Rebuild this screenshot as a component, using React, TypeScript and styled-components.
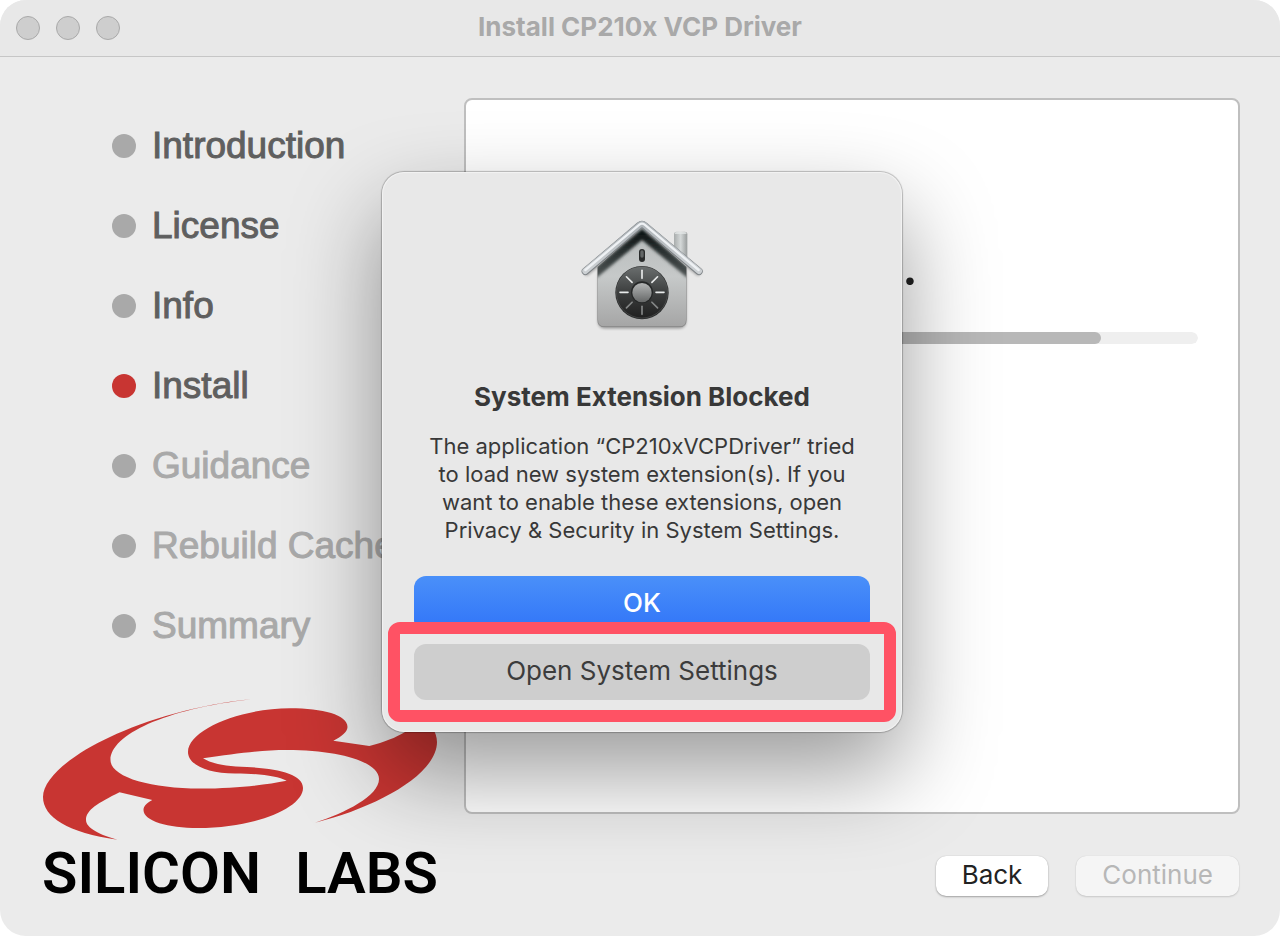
import React from "react";
import styled, { createGlobalStyle } from "styled-components";

const GlobalStyle = createGlobalStyle`
  *, *::before, *::after { box-sizing: border-box; }
  body { margin: 0; background: #fff; font-family: Inter, "Liberation Sans", sans-serif; }
  button { font: inherit; border: 0; padding: 0; }
  h1, h2, p, ol { margin: 0; padding: 0; }
`;

const Window = styled.div`
  position: relative;
  display: flex;
  flex-direction: column;
  min-height: 100vh;
  overflow: hidden;
  border-radius: 26px;
  background: #ebebeb;
`;

const TitleBar = styled.header`
  display: grid;
  grid-template-columns: 1fr auto 1fr;
  align-items: center;
  height: 57px;
  padding: 0 16px;
  background: #e8e8e8;
  border-bottom: 1px solid #c6c6c6;
`;

const Lights = styled.div`
  display: flex;
  gap: 16px;
`;

const Light = styled.button`
  width: 24px;
  height: 24px;
  border-radius: 50%;
  border: 1px solid #a9a9a9;
  background: #cecece;
`;

const Title = styled.h1`
  padding-bottom: 2px;
  font-size: 26px;
  line-height: 32px;
  font-weight: 700;
  color: #a9a9a9;
`;

const Content = styled.div`
  flex: 1;
  display: grid;
  grid-template-columns: 422px 1fr;
  padding: 41px 40px 40px 42px;
`;

const Sidebar = styled.div`
  display: flex;
  flex-direction: column;
  justify-content: space-between;
`;

const Steps = styled.ol`
  list-style: none;
  padding: 8px 0 0 70px;
`;

const Step = styled.li<{ $state: "done" | "current" | "pending" }>`
  display: flex;
  align-items: center;
  gap: 16px;
  height: 80px;
  white-space: nowrap;
  font-family: "Liberation Sans", Arial, sans-serif;
  font-size: 37px;
  line-height: 40px;
  color: ${(p) => (p.$state === "pending" ? "#a9a9a9" : "#5f5f5f")};
  -webkit-text-stroke: 1px currentColor;

  &::before {
    content: "";
    width: 24px;
    height: 24px;
    border-radius: 50%;
    background: ${(p) => (p.$state === "current" ? "#c83532" : "#a9a9a9")};
  }
`;

const Brand = styled.div`
  width: 396px;
  margin-bottom: -10px;
`;

const Swoosh = styled.svg`
  display: block;
  width: 100%;
`;

const Wordmark = styled.div`
  display: flex;
  justify-content: space-between;
  font-family: Roboto, "Liberation Sans", sans-serif;
  font-weight: 600;
  font-size: 58px;
  line-height: 66px;
  color: #000;
`;

const Main = styled.main`
  display: flex;
  flex-direction: column;
  gap: 42px;
`;

const Panel = styled.section`
  flex: 1;
  padding: 140px 40px 0;
  border: 2px solid #bfbfbf;
  border-radius: 8px;
  background: #fff;
`;

const Status = styled.p`
  padding-left: 366px;
  font-family: Lato, sans-serif;
  font-size: 60px;
  line-height: 44px;
  height: 92px;
  color: #222;
`;

const Progress = styled.progress`
  display: block;
  appearance: none;
  width: 100%;
  height: 12px;
  border: 0;
  border-radius: 6px;
  overflow: hidden;

  &::-webkit-progress-bar {
    background: #efefef;
    border-radius: 6px;
  }
  &::-webkit-progress-value {
    background: #b8b8b8;
    border-radius: 6px;
  }
`;

const Actions = styled.footer`
  display: flex;
  justify-content: flex-end;
  gap: 28px;
  padding-right: 1px;
`;

const PushButton = styled.button`
  height: 40px;
  padding: 0 26px 2px;
  border-radius: 10px;
  background: #fff;
  color: #222;
  font-size: 26px;
  line-height: 38px;
  box-shadow: 0 1px 2px rgba(0, 0, 0, 0.3), 0 0 1px rgba(0, 0, 0, 0.2);

  &:disabled {
    background: #f5f5f5;
    color: #b7b7b7;
    box-shadow: 0 1px 2px rgba(0, 0, 0, 0.14), 0 0 1px rgba(0, 0, 0, 0.14);
  }
`;

const Overlay = styled.div`
  position: absolute;
  inset: 0;
  display: flex;
  justify-content: center;
  align-items: flex-start;
  padding: 172px 0 0 4px;
`;

const Dialog = styled.div`
  display: flex;
  flex-direction: column;
  align-items: center;
  width: 520px;
  padding: 40px 32px 32px;
  border-radius: 22px;
  background: #e8e8e8;
  color: #383838;
  text-align: center;
  box-shadow: inset 0 0 1px 1px rgba(255, 255, 255, 0.5),
    0 0 1px 1px rgba(0, 0, 0, 0.24), 0 40px 92px rgba(0, 0, 0, 0.4);
`;

const DialogTitle = styled.h2`
  margin-top: 41px;
  font-size: 26px;
  line-height: 32px;
  font-weight: 700;
`;

const DialogText = styled.p`
  margin: 19px 0 32px;
  padding: 0 8px;
  font-size: 22px;
  line-height: 28px;
`;

const DialogButton = styled.button<{ $primary?: boolean }>`
  display: block;
  width: 100%;
  height: 56px;
  padding-bottom: 2px;
  border-radius: 12px;
  font-size: 26px;
  line-height: 54px;
  font-weight: ${(p) => (p.$primary ? 500 : 400)};
  color: ${(p) => (p.$primary ? "#fff" : "#3c3c3c")};
  background: ${(p) => (p.$primary ? "linear-gradient(#4a90f9, #3074f8)" : "#cecece")};
`;

const Highlight = styled.div`
  position: relative;
  width: 100%;
  margin-top: 12px;

  &::after {
    content: "";
    position: absolute;
    inset: -22px -26px;
    border: 12px solid #ff5264;
    border-radius: 12px;
    pointer-events: none;
  }
`;

const steps: { label: string; state: "done" | "current" | "pending" }[] = [
  { label: "Introduction", state: "done" },
  { label: "License", state: "done" },
  { label: "Info", state: "done" },
  { label: "Install", state: "current" },
  { label: "Guidance", state: "pending" },
  { label: "Rebuild Cache", state: "pending" },
  { label: "Summary", state: "pending" },
];

const ticks = [0, 45, 90, 135, 180, 225, 270, 315];

function SecurityIcon() {
  return (
    <svg width="128" height="128" viewBox="24 21 384 384" aria-hidden="true">
      <defs>
        <linearGradient id="wall" x1="0" y1="0" x2="0" y2="1">
          <stop offset="0" stopColor="#b4b8b8" />
          <stop offset="0.5" stopColor="#c6c9c9" />
          <stop offset="1" stopColor="#a4a4a4" />
        </linearGradient>
        <linearGradient id="chimney" x1="0" y1="0" x2="1" y2="0">
          <stop offset="0" stopColor="#a8acac" />
          <stop offset="0.5" stopColor="#d4d8d8" />
          <stop offset="1" stopColor="#989c9c" />
        </linearGradient>
        <linearGradient id="roof" x1="0" y1="0" x2="0" y2="1">
          <stop offset="0" stopColor="#aeb4b8" />
          <stop offset="1" stopColor="#ccd0d3" />
        </linearGradient>
        <linearGradient id="dial" x1="0" y1="0" x2="0" y2="1">
          <stop offset="0" stopColor="#6a6e6e" />
          <stop offset="0.5" stopColor="#3c3e3e" />
          <stop offset="1" stopColor="#202020" />
        </linearGradient>
        <linearGradient id="knob" x1="0" y1="0" x2="0" y2="1">
          <stop offset="0" stopColor="#b4b6b6" />
          <stop offset="1" stopColor="#656767" />
        </linearGradient>
        <linearGradient id="eave" x1="0" y1="0" x2="0" y2="1">
          <stop offset="0" stopColor="#101818" />
          <stop offset="1" stopColor="#4c5252" />
        </linearGradient>
        <filter id="soft" x="-20%" y="-20%" width="140%" height="140%">
          <feGaussianBlur stdDeviation="4" />
        </filter>
        <clipPath id="front">
          <path d="M82 186L216 66L350 186V344Q350 366 328 366H104Q82 366 82 344Z" />
        </clipPath>
      </defs>
      <path d="M86 190H348V346Q348 370 328 370H104Q84 370 84 346Z" fill="#000" opacity="0.4" filter="url(#soft)" />
      <path d="M44 206L216 70L390 206" fill="none" stroke="#000" strokeWidth="18" opacity="0.35" filter="url(#soft)" />
      <path d="M312 88Q312 80 320 80H344Q352 80 352 88V180L312 146Z" fill="url(#chimney)" />
      <path d="M314 86Q315 82 320 82H344Q349 82 350 86Z" fill="#e5e8e8" />
      <g clipPath="url(#front)">
        <rect x="80" y="60" width="274" height="310" fill="url(#wall)" />
        <path d="M72 208L216 88L360 208" fill="none" stroke="url(#eave)" strokeWidth="26" filter="url(#soft)" />
        <path d="M82 180V344Q82 366 104 366H328Q350 366 350 344V180" fill="none" stroke="#858585" strokeWidth="4" />
        <path d="M92 360H340" stroke="#777" strokeWidth="8" opacity="0.4" filter="url(#soft)" />
      </g>
      <path d="M46 199L208 62Q216 55 224 62L387 199" fill="none" stroke="#7d8286" strokeWidth="22" strokeLinecap="round" strokeLinejoin="round" />
      <path d="M46 198L208 61Q216 54 224 61L387 198" fill="none" stroke="url(#roof)" strokeWidth="18" strokeLinecap="round" strokeLinejoin="round" />
      <path d="M46 195L208 59Q216 53 224 59L386 195" fill="none" stroke="#eef1f4" strokeWidth="7" strokeLinecap="round" />
      <rect x="207" y="132" width="18" height="39" rx="9" fill="#292b2b" />
      <rect x="211" y="136" width="10" height="22" rx="5" fill="#626666" />
      <circle cx="216" cy="263" r="80" fill="#282a2a" />
      <circle cx="216" cy="262" r="77" fill="url(#dial)" />
      <circle cx="216" cy="262" r="77" fill="none" stroke="#777" strokeWidth="2" opacity="0.5" />
      {ticks.map((angle) => (
        <path
          key={angle}
          d="M216 196V220"
          transform={`rotate(${angle} 216 262)`}
          stroke={angle > 90 && angle < 270 ? "#858787" : "#e8eaea"}
          strokeWidth="5"
          strokeLinecap="round"
        />
      ))}
      <circle cx="216" cy="262" r="33" fill="#252727" />
      <circle cx="216" cy="263" r="29" fill="url(#knob)" />
    </svg>
  );
}

function BrandMark() {
  return (
    <Swoosh viewBox="42 699 396 141" aria-hidden="true">
      <path
        fill="#c83532"
        d="M251 699.3C200 704 146 720 110 737C75 753 43 777 43 797C43 817 68 833 117.5 839.7C100 835 86 828 86 820C86 810 98 803 119.5 792.3L152.3 800C146 803 143.5 807 143.5 810C143.5 821 168 828 198 828C255 828 303 808 303 788C303 774 278 768.5 247 767C225 766.5 210 763 203 758.3C235 754 260 750 287 750C340 750 379 762 379 779C379 796 345 813 315 822.7C375 808 437 775 437 742C437 732 430 722 420 715C415 728 400 738 369.3 746L333.3 740.7C341 737 347.5 732 347.5 727C347.5 715 323 708.3 290 708.3C240 708.3 188 730 188 752C188 765 208 773.5 235 773.5C260 773.5 277 776 286.7 780.7C265 785 235 788.5 200 788.5C150 788.5 110.5 777 110.5 760C110.5 735 165 709 251 699.3Z"
      />
    </Swoosh>
  );
}

export default function App() {
  return (
    <>
      <GlobalStyle />
      <Window>
        <TitleBar>
          <Lights>
            <Light aria-label="Close" />
            <Light aria-label="Minimize" />
            <Light aria-label="Zoom" />
          </Lights>
          <Title>Install CP210x VCP Driver</Title>
        </TitleBar>
        <Content>
          <Sidebar>
            <Steps>
              {steps.map((s) => (
                <Step key={s.label} $state={s.state}>
                  {s.label}
                </Step>
              ))}
            </Steps>
            <Brand>
              <BrandMark />
              <Wordmark>
                <span>SILICON</span>
                <span>LABS</span>
              </Wordmark>
            </Brand>
          </Sidebar>
          <Main>
            <Panel>
              <Status>…</Status>
              <Progress value={86} max={100} aria-label="Installation progress" />
            </Panel>
            <Actions>
              <PushButton>Back</PushButton>
              <PushButton disabled>Continue</PushButton>
            </Actions>
          </Main>
        </Content>
        <Overlay>
          <Dialog role="alertdialog" aria-labelledby="dialog-title" aria-describedby="dialog-text">
            <SecurityIcon />
            <DialogTitle id="dialog-title">System Extension Blocked</DialogTitle>
            <DialogText id="dialog-text">
              The application “CP210xVCPDriver” tried to load new system extension(s). If you want
              to enable these extensions, open Privacy &amp; Security in System Settings.
            </DialogText>
            <DialogButton $primary>OK</DialogButton>
            <Highlight>
              <DialogButton>Open System Settings</DialogButton>
            </Highlight>
          </Dialog>
        </Overlay>
      </Window>
    </>
  );
}
